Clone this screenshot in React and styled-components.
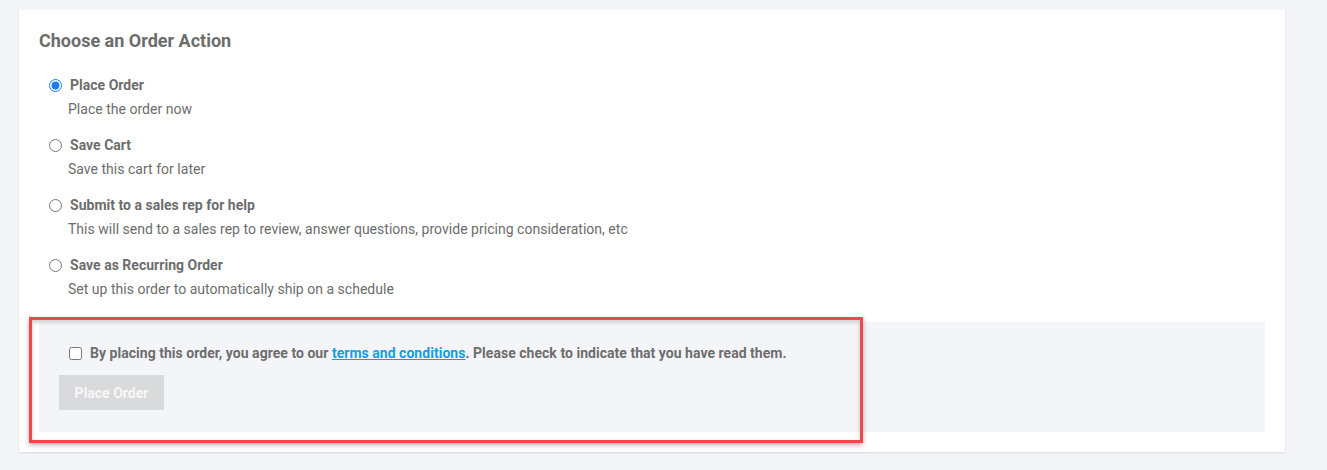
import styled, { createGlobalStyle } from "styled-components";

const GlobalStyle = createGlobalStyle`
  body {
    margin: 0;
    background: #f4f5f9;
    font-family: Roboto, "Liberation Sans", sans-serif;
  }
`;

const Page = styled.div`
  width: 1327px;
  height: 470px;
  padding: 10px 42px 0 19px;
  box-sizing: border-box;
`;

const Card = styled.div`
  position: relative;
  background: #fff;
  box-shadow: 0 1px 2px rgba(0, 0, 0, 0.12);
  padding: 20px;
  height: 442px;
  box-sizing: border-box;
`;

const Title = styled.h2`
  margin: 0 0 23px;
  font-size: 18px;
  font-weight: 700;
  color: #6d6d6d;
  line-height: 22px;
`;

const Options = styled.div`
  display: flex;
  flex-direction: column;
  gap: 16px;
  padding-left: 10px;
`;

const Option = styled.label`
  display: grid;
  grid-template-columns: 20px 1fr;
  row-gap: 4px;
  color: #6d6d6d;
  font-size: 14px;
  letter-spacing: 0.02px;
  cursor: pointer;
`;

const Radio = styled.input`
  margin: 0;
  width: 13px;
  height: 13px;
  align-self: center;
  accent-color: #1a7cf5;
`;

const OptionLabel = styled.span`
  font-weight: 700;
  line-height: 20px;
  padding-left: 1px;
`;

const OptionDesc = styled.span`
  grid-column: 2;
  line-height: 20px;
  margin-left: -1px;
`;

const AgreePanel = styled.div`
  margin-top: 23px;
  background: #f4f5f9;
  padding: 23px 20px 22px;
`;

const AgreeRow = styled.label`
  display: flex;
  align-items: center;
  gap: 8px;
  padding-left: 10px;
  font-size: 14px;
  font-weight: 700;
  letter-spacing: 0.03px;
  color: #6d6d6d;
`;

const Check = styled.input`
  margin: 0;
  width: 13px;
  height: 13px;
`;

const Link = styled.a`
  color: #1a9be0;
  text-decoration: underline;
`;

const SubmitButton = styled.button`
  display: block;
  margin-top: 14px;
  width: 105px;
  height: 35px;
  border: none;
  background: #d9dadc;
  color: #f7f7f7;
  font-family: inherit;
  font-size: 14px;
  font-weight: 700;
  cursor: not-allowed;
`;

const Highlight = styled.div`
  position: absolute;
  left: 10px;
  top: 307px;
  width: 834px;
  height: 126px;
  box-sizing: border-box;
  border: 3px solid #f04848;
  box-shadow: 0 2px 5px rgba(0, 0, 0, 0.3), inset 0 2px 4px rgba(0, 0, 0, 0.22);
  pointer-events: none;
`;

const options = [
  { label: "Place Order", desc: "Place the order now", checked: true },
  { label: "Save Cart", desc: "Save this cart for later" },
  {
    label: "Submit to a sales rep for help",
    desc: "This will send to a sales rep to review, answer questions, provide pricing consideration, etc",
  },
  { label: "Save as Recurring Order", desc: "Set up this order to automatically ship on a schedule" },
];

export default function App() {
  return (
    <>
      <GlobalStyle />
      <Page>
        <Card>
          <Title>Choose an Order Action</Title>
          <Options>
            {options.map((o) => (
              <Option key={o.label}>
                <Radio type="radio" name="action" defaultChecked={o.checked} />
                <OptionLabel>{o.label}</OptionLabel>
                <OptionDesc>{o.desc}</OptionDesc>
              </Option>
            ))}
          </Options>
          <AgreePanel>
            <AgreeRow>
              <Check type="checkbox" />
              <span>
                By placing this order, you agree to our <Link href="#">terms and conditions</Link>. Please
                check to indicate that you have read them.
              </span>
            </AgreeRow>
            <SubmitButton disabled>Place Order</SubmitButton>
          </AgreePanel>
          <Highlight />
        </Card>
      </Page>
    </>
  );
}
